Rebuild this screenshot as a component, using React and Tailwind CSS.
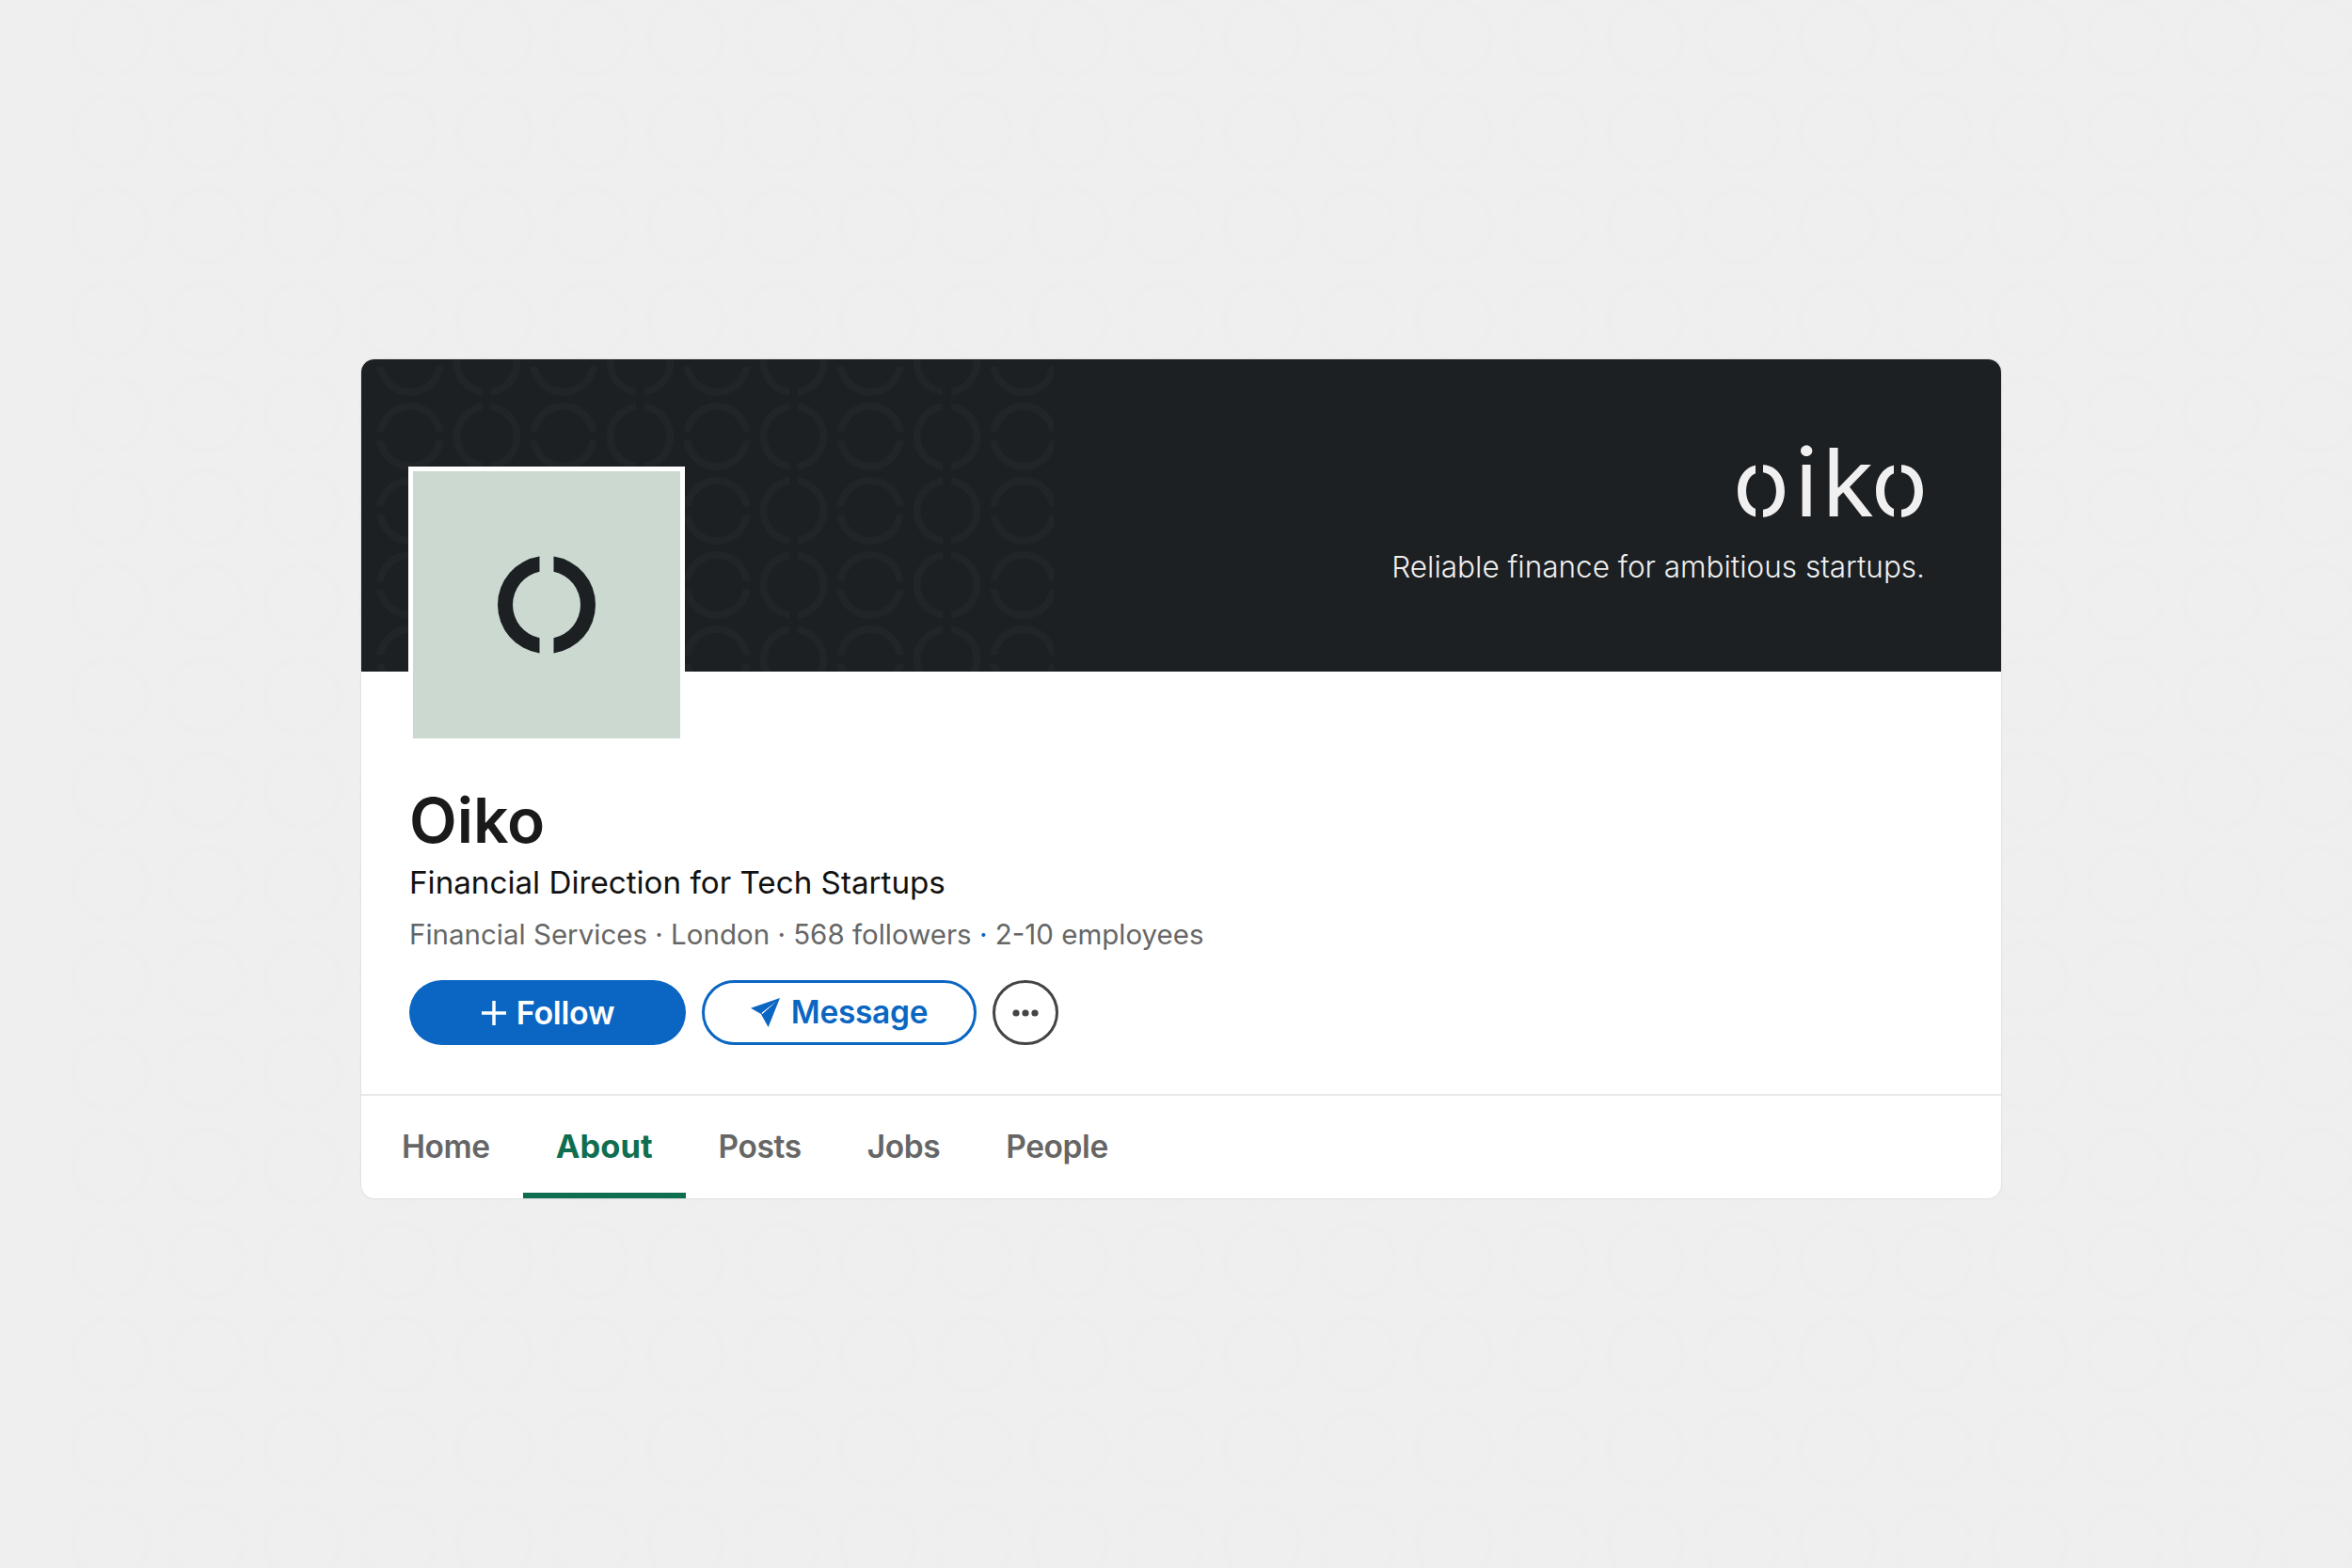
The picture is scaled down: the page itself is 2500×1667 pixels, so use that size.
function ringPath(cx, cy, R, r, gap, horizontal) {
  const g = gap / 2;
  const oy = Math.sqrt(R * R - g * g);
  const iy = Math.sqrt(r * r - g * g);
  if (!horizontal) {
    return `M${cx - g} ${cy - oy}A${R} ${R} 0 0 0 ${cx - g} ${cy + oy}L${cx - g} ${cy + iy}A${r} ${r} 0 0 1 ${cx - g} ${cy - iy}Z` +
      `M${cx + g} ${cy - oy}A${R} ${R} 0 0 1 ${cx + g} ${cy + oy}L${cx + g} ${cy + iy}A${r} ${r} 0 0 0 ${cx + g} ${cy - iy}Z`;
  }
  return `M${cx - oy} ${cy - g}A${R} ${R} 0 0 1 ${cx + oy} ${cy - g}L${cx + iy} ${cy - g}A${r} ${r} 0 0 0 ${cx - iy} ${cy - g}Z` +
    `M${cx - oy} ${cy + g}A${R} ${R} 0 0 0 ${cx + oy} ${cy + g}L${cx + iy} ${cy + g}A${r} ${r} 0 0 1 ${cx - iy} ${cy + g}Z`;
}

function HeaderPattern() {
  const rings = [];
  for (let row = 0; row < 5; row++) {
    for (let col = 0; col < 9; col++) {
      rings.push(ringPath(52 + col * 81.5, 3 + row * 79, 36, 28, 9, col % 2 === 0));
    }
  }
  return (
    <svg className="absolute left-0 top-0 h-[332px] w-[736px]" viewBox="0 0 736 332" aria-hidden="true">
      <path d={rings.join("")} fill="#212528" />
    </svg>
  );
}

function PageTexture() {
  const rings = [];
  for (let row = 0; row < 17; row++) {
    for (let col = 0; col < 25; col++) {
      rings.push(ringPath(117 + col * 102, 40 + row * 100, 43, 36, 8, col % 2 === 1));
    }
  }
  return (
    <svg className="absolute inset-0 h-full w-full" viewBox="0 0 2500 1667" aria-hidden="true">
      <path d={rings.join("")} fill="#eeeeee" />
    </svg>
  );
}

function WordO() {
  return (
    <span className="relative inline-block w-[57px] text-center">
      o
      <span className="absolute bottom-[10px] left-[24px] top-[30px] w-[8px] bg-[#1c2023]" />
    </span>
  );
}

const tabs = ["Home", "About", "Posts", "Jobs", "People"];

export default function App() {
  return (
    <div className="relative h-[1667px] w-full overflow-hidden bg-[#efefef] pl-[384px] pt-[382px] font-['Inter',sans-serif]">
      <PageTexture />
      <div className="relative h-[892px] w-[1743px] overflow-hidden rounded-[14px] bg-white shadow-[0_0_2px_rgba(0,0,0,0.18)]">
        <div className="relative flex h-[332px] flex-col items-end bg-[#1c2023] pr-[81px] pt-[76px] text-[#f0f0f0]">
          <HeaderPattern />
          <div className="relative flex h-[110px] items-end text-[100px] font-normal leading-[110px]">
            <WordO />
            <span className="ml-[7px] inline-block w-[28px] text-center">i</span>
            <span className="ml-[3px] inline-block w-[52px]">k</span>
            <WordO />
          </div>
          <p className="relative mt-[15px] text-[31.5px] font-light leading-[40px]">Reliable finance for ambitious startups.</p>
        </div>

        <div className="relative z-10 ml-[50px] -mt-[218px] flex h-[294px] w-[294px] items-center justify-center border-[5px] border-white bg-[#cbd9d0]">
          <svg className="h-[110px] w-[110px]" viewBox="0 0 110 110" aria-hidden="true">
            <path d={ringPath(55, 55, 52, 36, 15, false)} fill="#1c2023" />
          </svg>
        </div>

        <div className="pl-[51px] pt-[42px]">
          <h1 className="text-[66px] font-semibold leading-[80px] text-[#1a1a1a]">Oiko</h1>
          <p className="mt-[4px] text-[33.2px] leading-[44px] text-[#111]">Financial Direction for Tech Startups</p>
          <p className="mt-[13px] text-[29.5px] leading-[40px] text-[#666]">
            Financial Services · London · 568 followers <span className="text-[#0a66c2]">·</span> 2-10 employees
          </p>
          <div className="mt-[29px] flex items-center gap-[17px]">
            <button className="flex h-[69px] w-[294px] items-center justify-center gap-[10px] rounded-full bg-[#0a66c2] text-[34px] font-semibold tracking-[-0.3px] text-white">
              <svg className="h-[28px] w-[28px]" viewBox="0 0 28 28" aria-hidden="true">
                <path d="M14 1v26M1 14h26" stroke="currentColor" strokeWidth="3.5" fill="none" />
              </svg>
              Follow
            </button>
            <button className="flex h-[69px] w-[292px] items-center justify-center gap-[12px] rounded-full border-[3px] border-[#0a66c2] bg-white text-[33.5px] font-semibold tracking-[-0.3px] text-[#0a66c2]">
              <svg className="h-[31px] w-[31px]" viewBox="0 0 30 30" aria-hidden="true">
                <path d="M30 0L0 10.5l10.5 6L18 30zM27 3L11 15.5l1 1z" fill="currentColor" fillRule="evenodd" />
              </svg>
              Message
            </button>
            <button className="flex h-[69px] w-[70px] items-center justify-center rounded-full border-[3px] border-[#444] bg-white">
              <svg className="h-[10px] w-[30px]" viewBox="0 0 30 10" aria-hidden="true">
                <circle cx="5" cy="5" r="3.6" fill="#444" />
                <circle cx="15" cy="5" r="3.6" fill="#444" />
                <circle cx="25" cy="5" r="3.6" fill="#444" />
              </svg>
            </button>
          </div>
        </div>

        <nav className="absolute bottom-0 left-0 right-0 flex h-[111px] border-t-[2px] border-[#e8e8e8] pl-[8px]">
          {tabs.map((t) => (
            <a
              key={t}
              className={
                t === "About"
                  ? "flex items-center border-b-[6px] border-[#0f6e4f] px-[35px] pt-[5px] text-[34.5px] font-bold text-[#0f6e4f]"
                  : "flex items-center border-b-[6px] border-transparent px-[35px] pt-[5px] text-[33.5px] font-semibold tracking-[-0.4px] text-[#666]"
              }
            >
              {t}
            </a>
          ))}
        </nav>
      </div>
    </div>
  );
}
